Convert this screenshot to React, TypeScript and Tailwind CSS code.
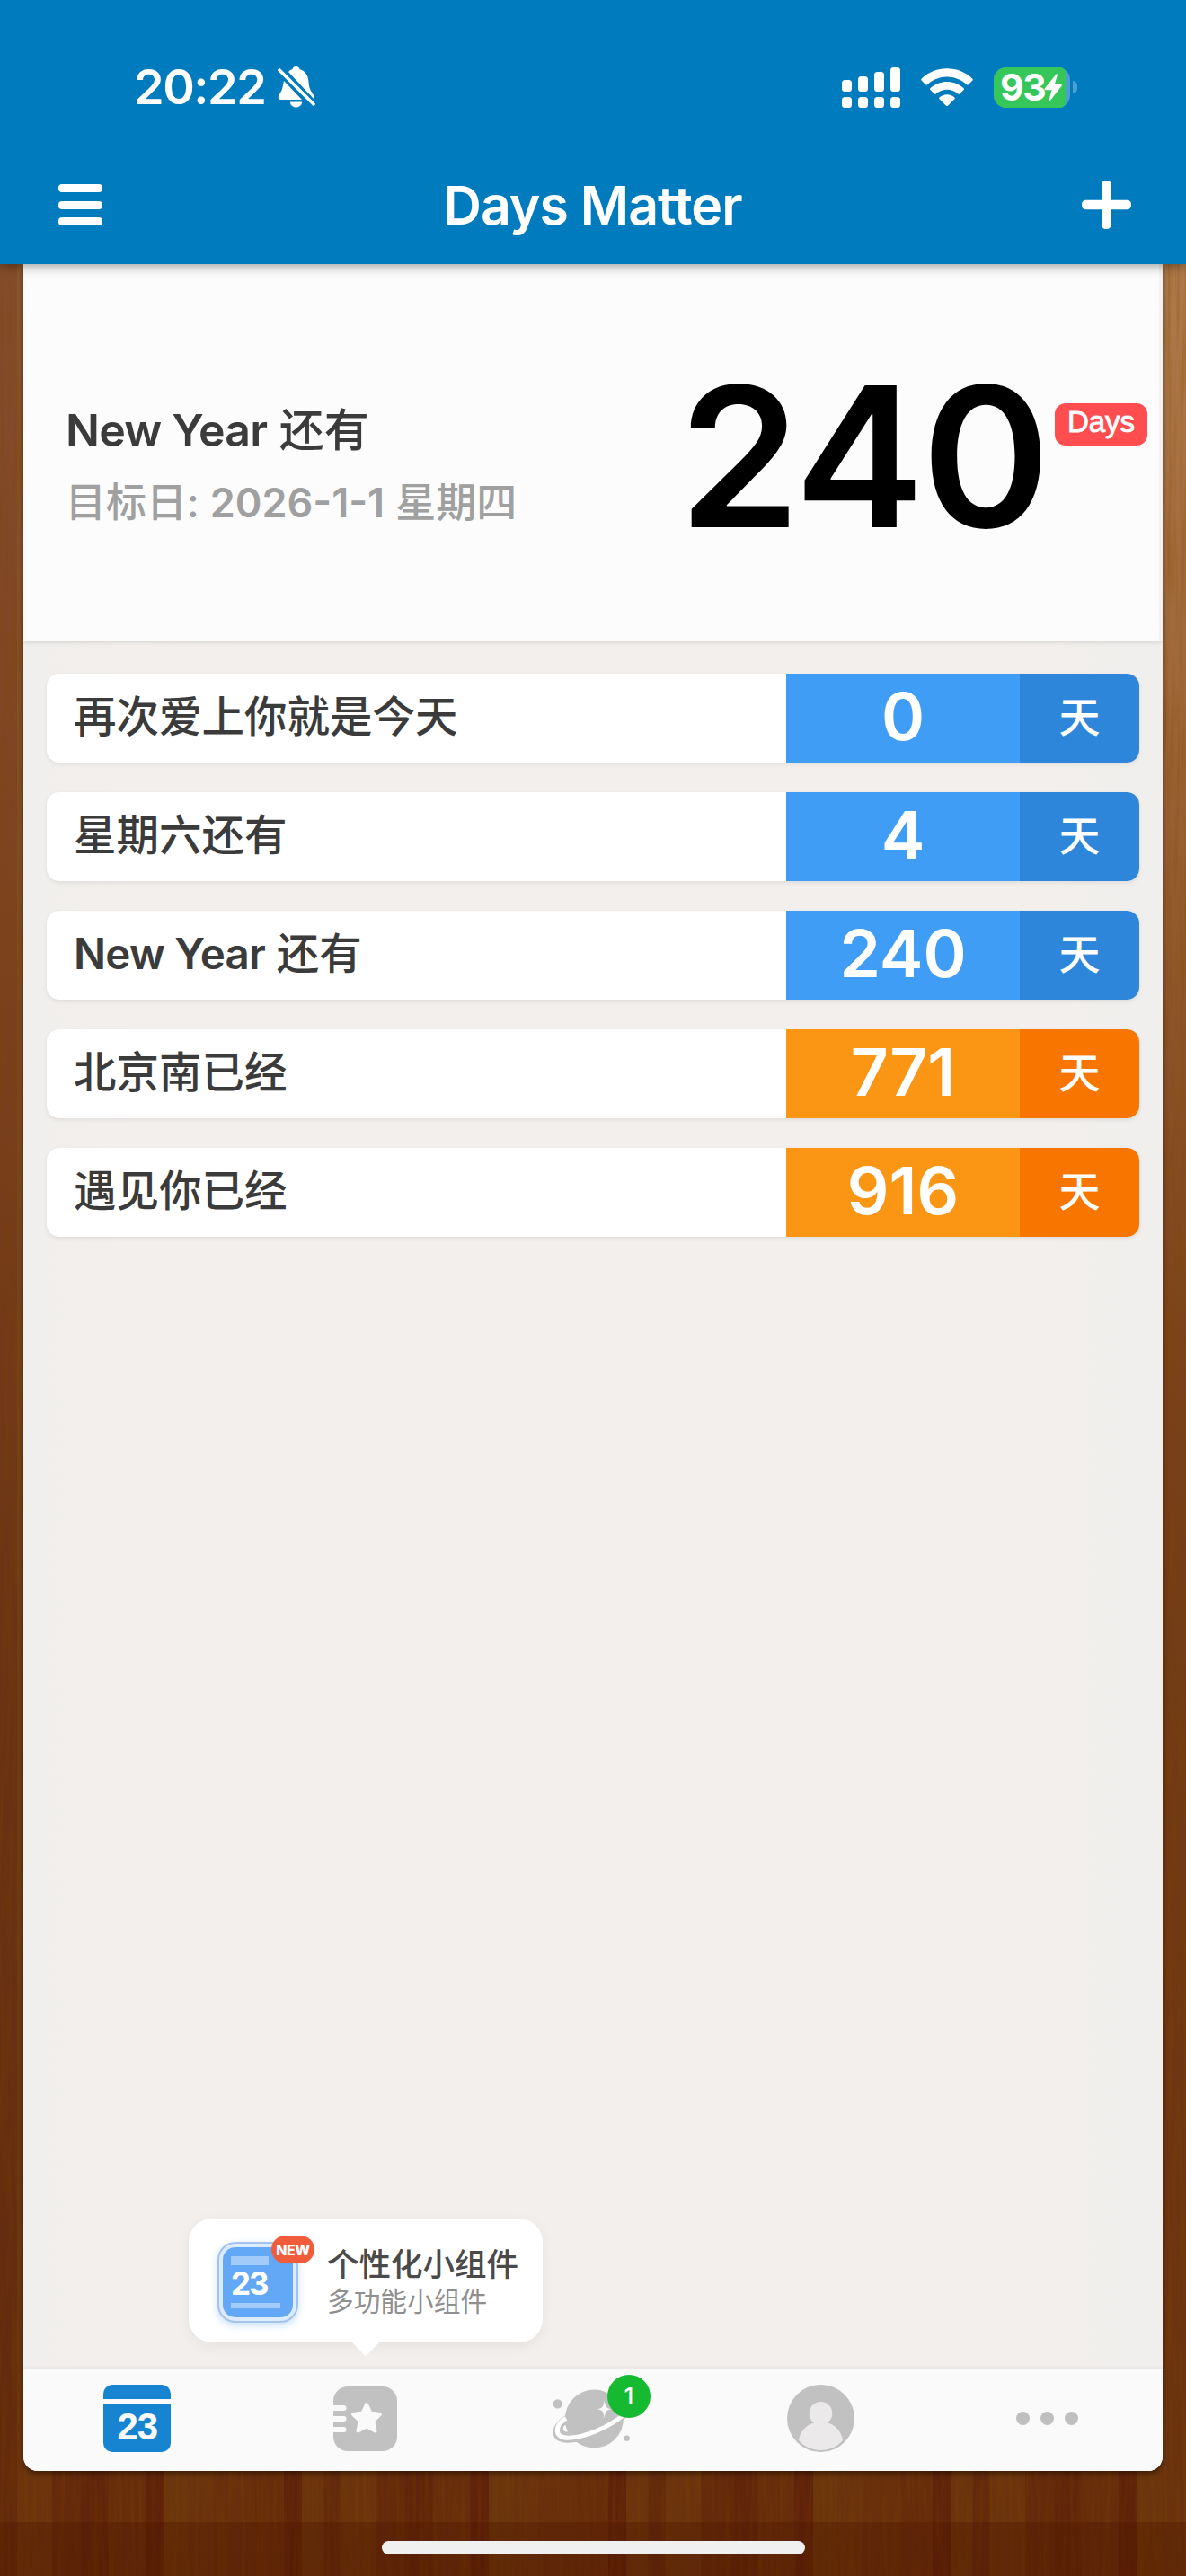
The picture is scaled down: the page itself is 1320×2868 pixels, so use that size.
import type { ReactNode } from 'react'
import { clsx } from 'clsx'

type DayEvent = {
  title: string
  days: number
  past?: boolean
}

const events: DayEvent[] = [
  { title: '再次爱上你就是今天', days: 0 },
  { title: '星期六还有', days: 4 },
  { title: 'New Year 还有', days: 240 },
  { title: '北京南已经', days: 771, past: true },
  { title: '遇见你已经', days: 916, past: true },
]

// one repeat of the floor: [x, width, color, opacity]
const planks: [number, number, string, number][] = [
  [0, 19, '#4a1000', 0.12],
  [19, 39, '#8a5a10', 0.12],
  [58, 32, '#5a1000', 0.16],
  [90, 31, '#4a0800', 0.24],
  [121, 41, '#6a2800', 0.1],
  [162, 21, '#4a0000', 0.26],
  [183, 27, '#8a5a10', 0.14],
  [210, 28, '#9a6010', 0.08],
  [238, 42, '#7a4000', 0.08],
  [280, 36, '#6a2000', 0.12],
  [316, 20, '#4a0000', 0.26],
  [336, 24, '#8a5a10', 0.12],
]

function WoodFloor() {
  return (
    <svg className="absolute inset-0 w-full h-full" viewBox="0 0 1320 2868" preserveAspectRatio="none">
      <defs>
        <linearGradient id="wood-base" x1="0" y1="0" x2="0" y2="1">
          <stop offset="0.1" stopColor="#8c5634" />
          <stop offset="0.35" stopColor="#834a24" />
          <stop offset="0.65" stopColor="#6e3817" />
          <stop offset="0.88" stopColor="#683111" />
          <stop offset="1" stopColor="#652e0c" />
        </linearGradient>
        <radialGradient id="wood-light" gradientUnits="userSpaceOnUse" cx="1380" cy="250" r="1250">
          <stop offset="0" stopColor="#c08c5c" stopOpacity="0.75" />
          <stop offset="0.4" stopColor="#b07a4a" stopOpacity="0.6" />
          <stop offset="1" stopColor="#a06a36" stopOpacity="0" />
        </radialGradient>
        <pattern id="wood-planks" width="361" height="2868" patternUnits="userSpaceOnUse">
          {planks.map(([x, width, color, opacity]) => (
            <rect key={x} x={x} width={width} height="2868" fill={color} opacity={opacity} />
          ))}
        </pattern>
        <filter id="wood-grain" x="0" y="0" width="100%" height="100%">
          <feTurbulence type="fractalNoise" baseFrequency="0.22 0.009" numOctaves="3" seed="7" />
          <feColorMatrix values="0 0 0 0 0.22  0 0 0 0 0.06  0 0 0 0 0  0 0 0 1.6 -0.65" />
        </filter>
      </defs>
      <rect width="1320" height="2868" fill="url(#wood-base)" />
      <rect width="1320" height="2868" fill="url(#wood-light)" />
      <rect width="1320" height="2868" fill="url(#wood-planks)" />
      <rect width="1320" height="2868" filter="url(#wood-grain)" opacity="0.4" />
      <rect y="2808" width="1320" height="60" fill="#4c1600" opacity="0.35" />
    </svg>
  )
}

function BellOff() {
  return (
    <svg className="w-[42px] h-[46px]" viewBox="0 0 42 46" fill="none">
      <path d="M7 16C5 27 4 28 1.5 32C0 35 1 37 4 37H27Z" fill="#fff" />
      <path d="M12 6C14 4 15 3.5 16.500 3C17 1 18.500 0 20.500 0C22.500 0 24 1 24.500 3C31 5 34 10 34.500 17C35 25 37 27 39.500 31C41 33.500 41 35 40 36Z" fill="#fff" />
      <path d="M14 39.500H27C27 43 24 45.500 20.500 45.500C17 45.500 14 43 14 39.500Z" fill="#fff" />
      <path d="M2 4L40 42" stroke="#007bbd" strokeWidth="8" />
      <path d="M2 4L40 42" stroke="#fff" strokeWidth="3.600" strokeLinecap="round" />
    </svg>
  )
}

function Signal() {
  const tops = [14, 10, 5, 0]
  return (
    <svg className="w-[65px] h-[45px]" viewBox="0 0 65 45" fill="#fff">
      {tops.map((top, i) => (
        <g key={top}>
          <rect x={i * 18} y={top} width="11" height={27 - top} rx="3.500" />
          <rect x={i * 18} y="33" width="11" height="12" rx="3.500" />
        </g>
      ))}
    </svg>
  )
}

function Wifi() {
  return (
    <svg className="w-[58px] h-[43px]" viewBox="0 0 58 43" fill="#fff">
      <path d="M0.800 11.500C16 -3.500 42 -3.500 57.200 11.500C58 12.300 58 13 57.200 13.800L53 18C52.200 18.700 51.500 18.700 50.700 18C38.500 6.500 19.500 6.500 7.300 18C6.500 18.700 5.800 18.700 5 18L0.800 13.800C0 13 0 12.300 0.800 11.500Z" />
      <path d="M10.700 22C21 12.700 37 12.700 47.300 22C48.200 22.800 48.200 23.400 47.400 24.200L43.200 28.300C42.400 29 41.800 29 41 28.300C34 22.300 24 22.300 17 28.300C16.200 29 15.600 29 14.800 28.300L10.600 24.200C9.800 23.400 9.800 22.800 10.700 22Z" />
      <path d="M20.800 32.200C25.300 28.300 32.700 28.300 37.200 32.200C38 33 38 33.600 37.200 34.400L30.200 41.400C29.400 42.200 28.600 42.200 27.800 41.400L20.800 34.400C20 33.600 20 33 20.800 32.200Z" />
    </svg>
  )
}

function Battery() {
  return (
    <div className="flex items-center gap-[3px]">
      <div className="flex w-[85px] h-[45px] rounded-[14px] bg-[#4d9fd3]">
        <div className="flex items-center w-[80px] h-full pl-[7px] rounded-l-[14px] rounded-r-[6px] bg-[#35c759]">
          <span className="shrink-0 text-[41px] leading-[45px] font-bold tracking-[-1.5px]">93</span>
          <svg className="w-[20px] h-[31px] shrink-0 -ml-px" viewBox="0 0 21 32" fill="#fff">
            <path d="M14 0.500C15 -0.500 16 0 15.500 1.500L12.500 12H19.500C21 12 21.300 13 20.300 14.300L7.500 31C6.500 32 5.500 31.500 6 30L9 19H1.500C0.200 19 0 18 0.800 17Z" />
          </svg>
        </div>
      </div>
      <div className="w-[5px] h-[14px] rounded-r-full bg-[#4d9fd3]" />
    </div>
  )
}

function StatusBar() {
  return (
    <div className="flex items-center justify-between h-[120px] pt-[74px] pl-[149px] pr-[121px]">
      <div className="flex items-center gap-[14px]">
        <span className="text-[54px] leading-none font-[560] tracking-[-1.5px]">20:22</span>
        <BellOff />
      </div>
      <div className="flex items-center gap-[23px]">
        <Signal />
        <Wifi />
        <Battery />
      </div>
    </div>
  )
}

function TitleBar() {
  return (
    <div className="flex items-center justify-between h-[134px] pt-[2px] pl-[65px] pr-[61px]">
      <button className="flex flex-col gap-[9.500px] w-[50px]">
        <span className="h-[9px] w-[49px] rounded-[4px] bg-white" />
        <span className="h-[9px] w-[49px] rounded-[4px] bg-white" />
        <span className="h-[9px] w-[49px] rounded-[4px] bg-white" />
      </button>
      <h1 className="text-[59px] leading-none font-[560] tracking-[-1px]">Days Matter</h1>
      <button>
        <svg className="w-[55px] h-[54px]" viewBox="0 0 55 54" fill="#fff">
          <rect x="22" width="10.500" height="54" rx="4.500" />
          <rect y="21.700" width="55" height="10.500" rx="4.500" />
        </svg>
      </button>
    </div>
  )
}

// Latin runs sit a bit heavier and tighter than the Chinese around them
function Label({ text }: { text: string }) {
  return text.split(/([A-Za-z]+(?: [A-Za-z]+)*)/).map((part, i) =>
    /[A-Za-z]/.test(part) ? (
      <span key={i} className="font-[580] tracking-[-0.016em]">
        {part}
      </span>
    ) : (
      part
    ),
  )
}

function Hero() {
  return (
    <section className="relative z-10 flex justify-between h-[420px] bg-[#fcfcfc] border-r-4 border-[#f3f2f1] shadow-[0_1px_5px_rgba(0,0,0,0.12)]">
      <div className="flex flex-col pt-[158px] pl-[47px]">
        <p className="text-[50px] leading-[54px] font-medium text-[#3b3b3b] whitespace-pre">
          <Label text="New Year 还有" />
        </p>
        <p className="mt-[29px] text-[45px] leading-[50px] font-medium text-[#a0a0a0] whitespace-nowrap">
          目标日: <span className="font-[580]">2026-1-1</span> 星期四
        </p>
      </div>
      <div className="flex pr-[13px]">
        <span className="pt-[106px] text-[217px] leading-[217px] font-[570] tracking-[-3px] text-black">240</span>
        <span className="mt-[155px] ml-[8px] flex items-center justify-center w-[103px] h-[47px] pb-[6px] rounded-[12px] bg-[#ff4d50] text-[33px] leading-none text-white font-['Liberation_Sans',sans-serif] [-webkit-text-stroke:0.9px_white]">
          Days
        </span>
      </div>
    </section>
  )
}

function EventRow({ title, days, past }: DayEvent) {
  return (
    <li className="flex h-[99px] rounded-[14px] overflow-hidden bg-white shadow-[0_2px_5px_rgba(0,0,0,0.08)]">
      <div className="flex-1 flex items-center pl-[30px] pb-[3px] text-[47.500px] leading-none font-medium text-[#3b3b3b]">
        <p className="whitespace-pre">
          <Label text={title} />
        </p>
      </div>
      <div
        className={clsx(
          'flex items-center justify-center w-[260px] pb-[4px] text-[73px] leading-none font-semibold text-white',
          past ? 'bg-[#fb9614]' : 'bg-[#409df6]',
        )}
      >
        {days}
      </div>
      <div
        className={clsx(
          'flex items-center justify-center w-[133px] pb-[4px] text-[46px] leading-none font-medium text-white',
          past ? 'bg-[#f87500]' : 'bg-[#2e86da]',
        )}
      >
        天
      </div>
    </li>
  )
}

function WidgetTip() {
  return (
    <div className="absolute left-[184px] bottom-[26px] w-[394px] h-[138px] rounded-[26px] bg-white shadow-[0_4px_16px_rgba(0,0,0,0.06)] flex items-center">
      <div className="relative ml-[32px] mt-[4px] w-[90px] h-[90px] rounded-[20px] border-2 border-[#a3c3ea] bg-[#dcebfd] p-[4px] shadow-[0_3px_8px_rgba(95,165,245,0.35)]">
        <div className="flex flex-col w-full h-full rounded-[14px] bg-[#62a8f6] pt-[10px] pl-[9px]">
          <span className="w-[42px] h-[10px] bg-[#a3cbfa]" />
          <span className="mt-[4px] text-[35px] leading-[32px] font-bold tracking-[-2px] text-white">23</span>
          <span className="mt-[6px] w-[55px] h-[6px] bg-[#a3cbfa]" />
        </div>
        <span className="absolute left-[58px] -top-[9px] w-[48px] h-[31px] rounded-full bg-[#f05c3c] flex items-center justify-center text-[16px] font-extrabold leading-none tracking-[-0.500px] text-white">
          NEW
        </span>
      </div>
      <div className="ml-[32px] mt-[4px]">
        <p className="text-[35.500px] leading-[42px] font-medium text-[#4a4a4a] whitespace-nowrap">个性化小组件</p>
        <p className="text-[29.700px] leading-[38px] text-[#8f8f8f] whitespace-nowrap">多功能小组件</p>
      </div>
      <svg className="absolute left-[182px] top-full w-[30px] h-[15px]" viewBox="0 0 30 15" fill="#fff">
        <path d="M0 0H30L17 13.500C15.500 15 14.500 15 13 13.500Z" />
      </svg>
    </div>
  )
}

function CalendarIcon() {
  return (
    <div className="w-[75px] h-[75px] rounded-[10px] overflow-hidden flex flex-col bg-[#1684d1]">
      <div className="mt-4 h-[4.500px] bg-[#fafafa]" />
      <span className="mt-[4px] text-center text-[42px] leading-[44px] font-bold tracking-[-1px] text-[#fafafa] font-['Liberation_Sans',sans-serif]">
        23
      </span>
    </div>
  )
}

function NotebookIcon() {
  return (
    <svg className="w-[71px] h-[72px]" viewBox="0 0 71 72">
      <rect width="71" height="72" rx="16" fill="#c1c1c1" />
      <g fill="#fafafa">
        <path d="M0 21H11.500a3 3 0 0 1 0 6H0ZM0 33H11.500a3 3 0 0 1 0 6H0ZM0 45H11.500a3 3 0 0 1 0 6H0Z" />
        <path
          d="M37 20L41.500 29.500L52 31L44.300 38.300L46.500 49.500L37 44.200L27.500 49.500L29.700 38.300L22 31L32.500 29.500Z"
          stroke="#fafafa"
          strokeWidth="4"
          strokeLinejoin="round"
        />
      </g>
    </svg>
  )
}

function PlanetIcon() {
  return (
    <svg className="w-[90px] h-[70px]" viewBox="38 85 270 210" fill="none">
      <circle cx="55" cy="140" r="15.500" fill="#c1c1c1" />
      <circle cx="286" cy="255" r="9.500" fill="#c1c1c1" />
      <circle cx="177" cy="190" r="97.500" fill="#c1c1c1" />
      <path d="M86 176C25 210 22 270 90 270C160 270 245 225 290 178L276 168L190 200L100 235C70 240 66 222 82 204Z" fill="#c1c1c1" />
      <path d="M83 188C42 214 44 254 90 254C150 252 225 218 280 174" stroke="#fff" strokeWidth="15" />
      <path d="M82 204C64 220 66 238 92 236Z" fill="#fff" stroke="#c1c1c1" strokeWidth="6" />
      <path d="M211 128C214 150 217 154 233 158C217 162 214 166 211 188C208 166 205 162 189 158C205 154 208 150 211 128Z" fill="#fafafa" />
    </svg>
  )
}

function ProfileIcon() {
  return (
    <svg className="w-[75px] h-[75px]" viewBox="0 0 75 75">
      <circle cx="37.500" cy="37.500" r="37.500" fill="#c1c1c1" />
      <path
        d="M37.500 19C45 19 50.300 25 50.300 32C50.300 36.500 48 40.500 44.700 42.500C54 44.500 60.500 52 62 62C56 69 47 73 37.500 73C28 73 19 69 13 62C14.500 52 21 44.500 30.300 42.500C27 40.500 24.700 36.500 24.700 32C24.700 25 30 19 37.500 19Z"
        fill="#ebe9ea"
      />
    </svg>
  )
}

function Tab({ children }: { children: ReactNode }) {
  return <button className="flex-1 flex items-center justify-center">{children}</button>
}

function TabBar() {
  return (
    <nav className="flex h-[117px] pb-[3px] bg-[#fafafa] border-t-3 border-[#ece8e7]">
      <Tab>
        <CalendarIcon />
      </Tab>
      <Tab>
        <NotebookIcon />
      </Tab>
      <Tab>
        <div className="relative">
          <PlanetIcon />
          <span className="absolute left-[61px] -top-[14px] w-[48px] h-[48px] rounded-full bg-[#16ba31] flex items-center justify-center text-[26px] leading-none font-medium text-white">
            1
          </span>
        </div>
      </Tab>
      <Tab>
        <ProfileIcon />
      </Tab>
      <Tab>
        <span className="flex gap-3 pr-[4px]">
          <i className="w-[15px] h-[15px] rounded-full bg-[#bfbfbf]" />
          <i className="w-[15px] h-[15px] rounded-full bg-[#bfbfbf]" />
          <i className="w-[15px] h-[15px] rounded-full bg-[#bfbfbf]" />
        </span>
      </Tab>
    </nav>
  )
}

export default function App() {
  return (
    <div className="relative w-[1320px] h-[2868px] overflow-hidden flex flex-col font-['Inter','Noto_Sans_CJK_SC',sans-serif]">
      <WoodFloor />
      <header className="relative z-20 flex flex-col justify-between h-[294px] bg-[#007bbd] text-white shadow-[0_2px_12px_rgba(0,0,0,0.4)]">
        <StatusBar />
        <TitleBar />
      </header>
      <div className="relative w-[1268px] h-[2457px] ml-[26px] flex flex-col rounded-b-[16px] overflow-hidden bg-[#f3efec] shadow-[0_3px_6px_rgba(0,0,0,0.45)]">
        <Hero />
        <main className="relative flex-1 px-[26px] pt-9 bg-[linear-gradient(90deg,#f1efed,#f3efec_20%,#f3efec_85%,#f0efed)]">
          <ul className="flex flex-col gap-[33px]">
            {events.map((event) => (
              <EventRow key={event.title} {...event} />
            ))}
          </ul>
          <WidgetTip />
        </main>
        <TabBar />
      </div>
      <div className="relative mt-[78px] mx-auto w-[471px] h-[15px] rounded-full bg-[#f0f0f0]" />
    </div>
  )
}
